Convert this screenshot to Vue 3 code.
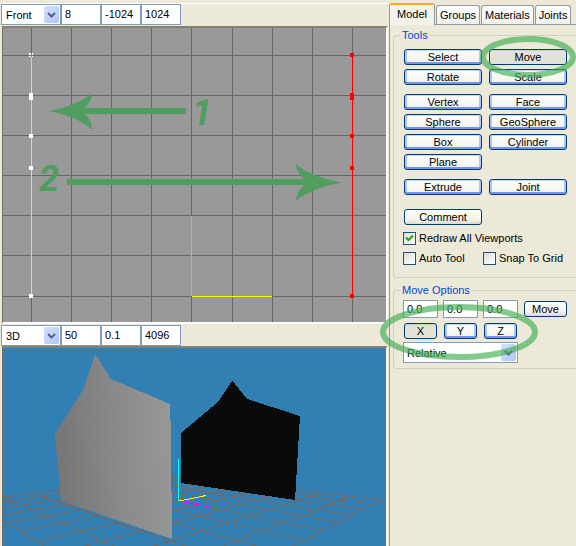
<script setup>
import { ref } from 'vue'

const views = ref([
  { id: 'front', mode: 'Front', fields: ['8', '-1024', '1024'] },
  { id: 'persp', mode: '3D', fields: ['50', '0.1', '4096'] },
])
const modes = ['Front', 'Back', 'Left', 'Right', 'Top', 'Bottom', '3D']
const fieldLabels = ['Zoom', 'Near', 'Far']

const tabs = ['Model', 'Groups', 'Materials', 'Joints']
const activeTab = ref('Model')

const toolGroups = [
  ['Select', 'Move', 'Rotate', 'Scale'],
  ['Vertex', 'Face', 'Sphere', 'GeoSphere', 'Box', 'Cylinder', 'Plane'],
  ['Extrude', 'Joint'],
]
const activeTool = ref('Move')
const redraw = ref(true)
const autoTool = ref(false)
const snap = ref(false)

const offset = ref(['0.0', '0.0', '0.0'])
const axes = ['X', 'Y', 'Z']
const activeAxis = ref('X')
const space = ref('Relative')

const columns = [31, 71, 111, 151, 191, 232, 272, 312, 352]
const rows = [55, 95, 135, 175, 215, 255, 296]
const vertices = [55, 95, 98, 136, 168, 296]

// Ground plane corners in homogeneous form: x, y, weight
const back = [175, 475, 1]
const right = [381, 500, 0.61]
const front = [158, 617, 0.215]
const left = [-28, 501, 0.605]
function project(u, v) {
  const k = [
    [back, (1 - u) * (1 - v)],
    [right, u * (1 - v)],
    [front, u * v],
    [left, (1 - u) * v],
  ]
  let x = 0, y = 0, w = 0
  for (const [c, f] of k) {
    x += c[0] * c[2] * f
    y += c[1] * c[2] * f
    w += c[2] * f
  }
  return [x / w, y / w]
}
const cells = 10
const floor = []
for (let i = 0; i <= cells; i++) {
  const t = i / cells
  floor.push([project(t, 0), project(t, 1)], [project(0, t), project(1, t)])
}
</script>

<template>
  <main class="app">
    <section class="views">
      <template v-for="view in views" :key="view.id">
        <div class="bar">
          <div class="combo bar-combo">
            <select v-model="view.mode" :aria-label="view.id + ' view mode'">
              <option v-for="m in modes" :key="m">{{ m }}</option>
            </select>
            <span class="drop"><svg viewBox="0 0 9 6"><path d="M1 1L4.500 4.500L8 1" /></svg></span>
          </div>
          <input
            v-for="(f, i) in view.fields" :key="i" v-model="view.fields[i]"
            class="field" type="text" :aria-label="fieldLabels[i]"
          />
        </div>

        <div v-if="view.id === 'front'" class="viewport ortho">
          <svg viewBox="3 28 383 294" preserveAspectRatio="xMinYMin slice">
            <g shape-rendering="crispEdges">
              <rect v-for="x in columns" :key="'c' + x" :x="x" y="28" width="1" height="294" fill="#666" />
              <rect v-for="y in rows" :key="'r' + y" x="3" :y="y" width="384" height="1" fill="#666" />
              <rect x="31" y="55" width="1" height="241" fill="#d2d2d2" />
              <rect x="352" y="55" width="1" height="241" fill="#f00" />
              <rect v-for="y in vertices" :key="'w' + y" x="29" :y="y - 2" width="4" height="4" fill="#fff" />
              <rect v-for="y in vertices" :key="'s' + y" x="350" :y="y - 2" width="4" height="4" fill="#f00" />
              <path d="M31.500 53V57M29 55.500H33" stroke="#777" />
              <rect x="191" y="216" width="1" height="80" fill="#2ee" />
              <rect x="192" y="296" width="80" height="1" fill="#ff0" />
            </g>
            <g fill="#509d60">
              <path d="M49 111Q79 105 92 93Q92 101 85 108H186V114H85Q92 121 92 130Q79 117 49 111Z" />
              <path d="M341 182.500Q309 176 296 164Q296 172 304 179H67V185H304Q296 193 296 201Q309 189 341 182.500Z" />
              <text class="mark" x="192" y="125">1</text>
              <text class="mark" x="39" y="191">2</text>
            </g>
          </svg>
        </div>

        <div v-else class="viewport scene">
          <svg viewBox="3 348 383 198" preserveAspectRatio="xMinYMin slice">
            <defs>
              <linearGradient id="wall" x1="0" y1="0.100" x2="1" y2="0">
                <stop offset="0" stop-color="#777" />
                <stop offset="0.500" stop-color="#8a8a8a" />
                <stop offset="1" stop-color="#999" />
              </linearGradient>
            </defs>
            <g stroke="#746761" stroke-width="1" shape-rendering="crispEdges">
              <line v-for="(l, i) in floor" :key="i" :x1="l[0][0]" :y1="l[0][1]" :x2="l[1][0]" :y2="l[1][1]" />
            </g>
            <g shape-rendering="crispEdges">
              <path d="M232 381L235 384L247 399L300 416L295 500L181 483V433L218 402Z" fill="#0a0a0a" />
              <path d="M95 354L99 360L111 379L170 404V421H171V491H172V539L61 501L55 434L84 388Z" fill="url(#wall)" />
              <path d="M179 501L206 495.500" stroke="#ff0" />
              <path d="M179 501L209 507" stroke="#f0f" />
              <rect x="178" y="459" width="1" height="42" fill="#0ff" />
            </g>
          </svg>
        </div>
      </template>
    </section>

    <aside class="panel">
      <nav class="tabs" role="tablist">
        <button
          v-for="t in tabs" :key="t" type="button" role="tab" class="tab"
          :class="{ on: activeTab === t }" :aria-selected="activeTab === t" @click="activeTab = t"
        >{{ t }}</button>
      </nav>
      <div class="page">
        <fieldset class="group">
          <legend>Tools</legend>
          <div class="tools">
            <div v-for="(g, i) in toolGroups" :key="i" class="pair">
              <button
                v-for="t in g" :key="t" type="button" class="btn toggle"
                :class="{ down: activeTool === t }" @click="activeTool = t"
              >{{ t }}</button>
            </div>
          </div>
          <div class="pair comment"><button type="button" class="btn">Comment</button></div>
          <div class="checks">
            <label class="wide"><input v-model="redraw" type="checkbox" /><svg viewBox="0 0 13 13"><path d="M3 5.500L5.500 8L10 3.500" /></svg>Redraw All Viewports</label>
            <label><input v-model="autoTool" type="checkbox" /><svg viewBox="0 0 13 13"><path d="M3 5.500L5.500 8L10 3.500" /></svg>Auto Tool</label>
            <label><input v-model="snap" type="checkbox" /><svg viewBox="0 0 13 13"><path d="M3 5.500L5.500 8L10 3.500" /></svg>Snap To Grid</label>
          </div>
        </fieldset>

        <fieldset class="group options">
          <legend>Move Options</legend>
          <div class="move">
            <input v-for="(a, i) in axes" :key="a" v-model="offset[i]" class="coord" type="text" :aria-label="a + ' offset'" />
            <button type="button" class="btn go">Move</button>
            <button
              v-for="a in axes" :key="'b' + a" type="button" class="btn toggle axis"
              :class="{ down: activeAxis === a }" @click="activeAxis = a"
            >{{ a }}</button>
          </div>
          <div class="combo space">
            <select v-model="space" aria-label="Coordinate space">
              <option>Relative</option>
              <option>Absolute</option>
            </select>
            <span class="drop"><svg viewBox="0 0 9 6"><path d="M1 1L4.500 4.500L8 1" /></svg></span>
          </div>
        </fieldset>
      </div>
      <svg class="rings" viewBox="0 0 187 370" aria-hidden="true">
        <ellipse cx="139" cy="57" rx="45" ry="18" />
        <ellipse cx="70" cy="332" rx="76" ry="25" />
      </svg>
    </aside>
  </main>
</template>

<style>
body {
  margin: 0;
  background: #ece9d8;
}
</style>

<style scoped>
.app {
  display: grid;
  grid-template-columns: minmax(0, 1fr) 187px;
  min-height: 100vh;
  box-sizing: border-box;
  overflow: hidden;
  background: #ece9d8;
  color: #000;
  font: 11px/13px "Liberation Sans", Arial, sans-serif;
}
button, input, select {
  font: inherit;
  color: inherit;
  margin: 0;
  box-sizing: border-box;
}
.views {
  display: flex;
  flex-direction: column;
  border-top: 1px solid #fff;
  margin-top: 3px;
}
.bar {
  display: flex;
  padding: 0 1px 1px;
}
.ortho + .bar {
  padding: 1px 1px 0;
}
.combo {
  position: relative;
  display: flex;
  box-sizing: border-box;
  height: 21px;
  background: #fff;
  border: 1px solid #7f9db9;
}
.bar-combo {
  width: 60px;
}
.combo select {
  appearance: none;
  border: 0;
  background: none;
  width: 100%;
  padding: 1px 17px 0 4px;
  outline: 0;
}
.space select {
  padding-left: 3px;
}
.drop {
  position: absolute;
  top: 1px;
  right: 1px;
  bottom: 1px;
  width: 15px;
  display: grid;
  place-items: center;
  border-radius: 2px;
  background: linear-gradient(135deg, #d3e0ff, #b0c5fa);
  pointer-events: none;
}
.drop svg {
  width: 9px;
  height: 6px;
  fill: none;
  stroke: #4d6185;
  stroke-width: 2;
}
.field {
  width: 40px;
  height: 21px;
  padding: 0 3px 2px;
  border: 1px solid #7f9db9;
  background: #fff;
  border-radius: 0;
}
.viewport {
  box-sizing: border-box;
  margin: 0 1px 0 2px;
  border: 1px solid #716f64;
  border-right: 2px solid #fff;
  border-top: 2px solid #85816f;
  overflow: hidden;
}
.viewport svg {
  display: block;
  width: 100%;
  height: 100%;
}
.ortho {
  height: 298px;
  border-bottom: 2px solid #fff;
  background: #999;
}
.scene {
  flex: 1 0 200px;
  height: 200px;
  border-bottom: 0;
  background: #3280b3;
}
.mark {
  font: italic bold 36px Roboto, "Liberation Sans", sans-serif;
}

.panel {
  position: relative;
  display: flex;
  flex-direction: column;
}
.tabs {
  display: flex;
  align-items: flex-end;
  gap: 1px;
  padding-top: 3px;
  height: 21px;
}
.tab {
  height: 19px;
  padding: 1px 3px 0;
  border: 1px solid #919b9c;
  border-bottom: 0;
  border-radius: 3px 3px 0 0;
  background: linear-gradient(#fff, #f0efe8);
  white-space: nowrap;
}
.tab.on {
  height: 22px;
  padding: 0 7px 1px;
  border-top: 2px solid #f7a92c;
  margin-bottom: -1px;
  background: #f4f2e8;
  z-index: 1;
}
.page {
  flex: 1;
  padding: 4px 0 0 3px;
  border-left: 1px solid #919b9c;
  border-top: 1px solid #919b9c;
}
.group {
  min-width: 0;
  margin: 0;
  padding: 0 0 0 9px;
  border: 1px solid #d0d0bf;
  border-right: 0;
  border-radius: 4px 0 0 4px;
  box-sizing: border-box;
}
.group legend {
  margin: 0;
  padding: 0 2px;
  margin-left: -3px;
  color: #0046d5;
}
.tools {
  display: grid;
  gap: 9px;
  padding: 7px 0 0 1px;
}
.pair {
  display: grid;
  grid-template-columns: 78px 78px;
  gap: 4px 7px;
}
.comment {
  padding: 14px 0 0 1px;
}
.btn {
  height: 16px;
  padding: 0 2px;
  border: 1px solid #003c74;
  border-radius: 3px;
  background: linear-gradient(#fff, #f3f2ec 70%, #dcd8cb);
  line-height: 14px;
  white-space: nowrap;
}
.toggle {
  background: linear-gradient(#fff, #f0f0ea);
  box-shadow: inset 0 1px #c2d8ff, inset 0 -2px #7595ea, inset 2px 0 #b0c6f5, inset -2px 0 #b0c6f5;
}
.toggle.down {
  background: #e3e2da;
  box-shadow: inset 0 1px #d0cec4;
}
.checks {
  display: grid;
  grid-template-columns: 80px 90px;
  gap: 7px 0;
  padding: 7px 0 12px;
}
.checks label {
  position: relative;
  display: flex;
  align-items: center;
  gap: 3px;
  white-space: nowrap;
}
.wide {
  grid-column: span 2;
}
.checks input {
  appearance: none;
  width: 13px;
  height: 13px;
  border: 1px solid #1c5180;
  background: linear-gradient(135deg, #dcdcd7, #fff);
}
.checks svg {
  position: absolute;
  left: 0;
  top: 0;
  width: 13px;
  height: 13px;
  fill: none;
  stroke: #21a121;
  stroke-width: 2;
  visibility: hidden;
  pointer-events: none;
}
.checks input:checked + svg {
  visibility: visible;
}
.options {
  margin-top: 6px;
  padding-bottom: 5px;
}
.move {
  display: grid;
  grid-template-columns: 35px 35px 35px 44px;
  gap: 5px;
  padding-top: 3px;
  align-items: center;
}
.coord {
  height: 18px;
  width: 35px;
  padding: 0 3px;
  border: 1px solid #7f9db9;
  background: #fff;
}
.go {
  margin-left: 1px;
}
.axis {
  margin: 0 1px;
}
.space {
  width: 115px;
  margin-top: 3px;
}
.rings {
  position: absolute;
  left: 0;
  top: 0;
  width: 187px;
  height: 370px;
  overflow: visible;
  pointer-events: none;
  z-index: 2;
  fill: none;
  stroke: #3fae52;
  stroke-opacity: 0.650;
  stroke-width: 6;
}
</style>
